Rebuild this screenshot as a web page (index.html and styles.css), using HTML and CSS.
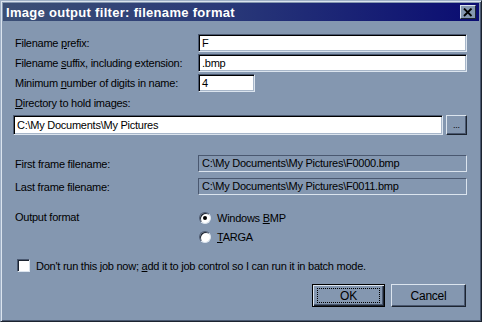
FILE: index.html
```html
<html>
<head>
	<title>Image output filter</title>
<link rel="stylesheet" href="styles.css">
</head>
<body>
	<div class='window'>
		<div class='titlebar'>
			<span class='title'>Image output filter: filename format</span>
			<span class='close'>
				<svg width='10' height='9' viewBox='0 0 10 9'><path d='M1 0.5 L8.5 8 M8.5 0.5 L1 8' stroke='#000' stroke-width='1.8'/></svg>
			</span>
		</div>
		<div class='content'>
			<div class='row'>
				<div class='label'>Filename <u>p</u>refix:</div>
				<div class='field wide'>F</div>
			</div>
			<div class='row'>
				<div class='label'>Filename <u>s</u>uffix, including extension:</div>
				<div class='field wide'>.bmp</div>
			</div>
			<div class='row'>
				<div class='label'>Minimum <u>n</u>umber of digits in name:</div>
				<div class='field small'>4</div>
			</div>

			<div class='dirlabel'><u>D</u>irectory to hold images:</div>
			<div class='dirrow'>
				<div class='field dir'>C:\My Documents\My Pictures</div>
				<div class='browse'>...</div>
			</div>

			<div class='row ro-row first'>
				<div class='label'>First frame filename:</div>
				<div class='readonly'>C:\My Documents\My Pictures\F0000.bmp</div>
			</div>
			<div class='row ro-row'>
				<div class='label'>Last frame filename:</div>
				<div class='readonly'>C:\My Documents\My Pictures\F0011.bmp</div>
			</div>

			<div class='row format'>
				<div class='label'>Output format</div>
				<div class='radios'>
					<div class='radio-item'><span class='radio on'></span><span>Windows <u>B</u>MP</span></div>
					<div class='radio-item'><span class='radio'></span><span><u>T</u>ARGA</span></div>
				</div>
			</div>

			<div class='check-row'>
				<span class='checkbox'></span><span>Don't run this job now; <u>a</u>dd it to job control so I can run it in batch mode.</span>
			</div>

			<div class='buttons'>
				<div class='button default'><span class='focus'>OK</span></div>
				<div class='button'>Cancel</div>
			</div>
		</div>
	</div>
</body>
</html>
```

FILE: styles.css
```css
body{
	margin:0;
	background-color:#8497b0;
	font-family:"Liberation Sans", Arial, sans-serif;
	font-size:11px;
	letter-spacing:-0.25px;
	color:#000;
}
u{
	text-decoration:underline;
	text-underline-offset:1px;
}
.window{
	width:482px;
	height:322px;
	box-sizing:border-box;
	background-color:#8497b0;
	border-top:1px solid #9fb0c6;
	border-left:1px solid #9fb0c6;
	border-right:1px solid #1c2430;
	border-bottom:1px solid #1c2430;
	box-shadow:inset 1px 1px 0 #dbe4ee, inset -1px -1px 0 #4a5870;
	padding:2px;
}
.titlebar{
	height:18px;
	background:linear-gradient(to right, #3b4f75, #2a3a78 45%, #0a0c72);
	display:flex;
	align-items:center;
	justify-content:space-between;
	padding:0 3px 0 3px;
}
.title{
	color:#fff;
	font-weight:bold;
	font-size:13px;
	letter-spacing:0.3px;
}
.close{
	width:16px;
	height:14px;
	box-sizing:border-box;
	background-color:#8497b0;
	border-top:1px solid #dbe4ee;
	border-left:1px solid #dbe4ee;
	border-right:1px solid #1c2430;
	border-bottom:1px solid #1c2430;
	display:flex;
	align-items:center;
	justify-content:center;
}
.content{
	padding:13px 12px 0 10px;
}
.row{
	display:flex;
	align-items:center;
	height:18px;
	margin-bottom:2px;
	padding-left:2px;
}
.label{
	width:183px;
	flex:none;
}
.field{
	height:18px;
	box-sizing:border-box;
	background-color:#fff;
	border-top:1px solid #4a5870;
	border-left:1px solid #4a5870;
	border-right:1px solid #dbe4ee;
	border-bottom:1px solid #dbe4ee;
	box-shadow:inset 1px 1px 0 #000, inset -1px -1px 0 #a7b6c9;
	padding:2px 3px 0 3px;
	line-height:13px;
}
.wide{
	flex:1;
}
.small{
	width:57px;
}
.dirlabel{
	margin-top:5px;
	padding-left:2px;
	height:14px;
}
.dirrow{
	display:flex;
	align-items:center;
	gap:3px;
	margin-top:4px;
}
.dir{
	flex:1;
	height:20px;
	padding-top:3px;
}
.browse{
	width:21px;
	height:20px;
	box-sizing:border-box;
	border-top:1px solid #dbe4ee;
	border-left:1px solid #dbe4ee;
	border-right:1px solid #1c2430;
	border-bottom:1px solid #1c2430;
	box-shadow:inset -1px -1px 0 #4a5870;
	text-align:center;
	line-height:18px;
	font-size:9px;
}
.ro-row{
	height:17px;
	margin-bottom:6px;
}
.first{
	margin-top:20px;
}
.readonly{
	flex:1;
	height:17px;
	box-sizing:border-box;
	border-top:1px solid #4a5870;
	border-left:1px solid #4a5870;
	border-right:1px solid #dbe4ee;
	border-bottom:1px solid #dbe4ee;
	padding:1px 3px 0 3px;
	line-height:13px;
}
.format{
	align-items:flex-start;
	height:auto;
	margin-top:16px;
}
.radios{
	display:flex;
	flex-direction:column;
	gap:6px;
}
.radio-item{
	display:flex;
	align-items:center;
	height:13px;
}
.radio{
	width:12px;
	height:12px;
	box-sizing:border-box;
	border-radius:50%;
	background-color:#fff;
	border:1px solid;
	border-color:#4a5870 #dbe4ee #dbe4ee #4a5870;
	box-shadow:inset 1px 1px 0 #1c2430;
	margin-right:6px;
	margin-left:1px;
	position:relative;
}
.radio.on::after{
	content:'';
	position:absolute;
	left:3px;
	top:3px;
	width:4px;
	height:4px;
	border-radius:50%;
	background-color:#000;
}
.check-row{
	display:flex;
	align-items:center;
	margin-top:16px;
	padding-left:4px;
}
.checkbox{
	width:13px;
	height:13px;
	box-sizing:border-box;
	background-color:#fff;
	border-top:1px solid #4a5870;
	border-left:1px solid #4a5870;
	border-right:1px solid #dbe4ee;
	border-bottom:1px solid #dbe4ee;
	box-shadow:inset 1px 1px 0 #1c2430;
	margin-right:6px;
}
.buttons{
	display:flex;
	justify-content:flex-end;
	gap:6px;
	margin-top:12px;
	padding-right:1px;
}
.button{
	width:75px;
	height:23px;
	box-sizing:border-box;
	border-top:1px solid #dbe4ee;
	border-left:1px solid #dbe4ee;
	border-right:1px solid #1c2430;
	border-bottom:1px solid #1c2430;
	box-shadow:inset -1px -1px 0 #4a5870;
	display:flex;
	align-items:center;
	justify-content:center;
	font-size:12px;
}
.default{
	border:1px solid #000;
	box-shadow:inset 1px 1px 0 #dbe4ee, inset -1px -1px 0 #1c2430, inset -2px -2px 0 #4a5870;
	width:73px;
}
.focus{
	width:63px;
	height:15px;
	box-sizing:border-box;
	border:1px dotted #000;
	display:flex;
	align-items:center;
	justify-content:center;
}
```
